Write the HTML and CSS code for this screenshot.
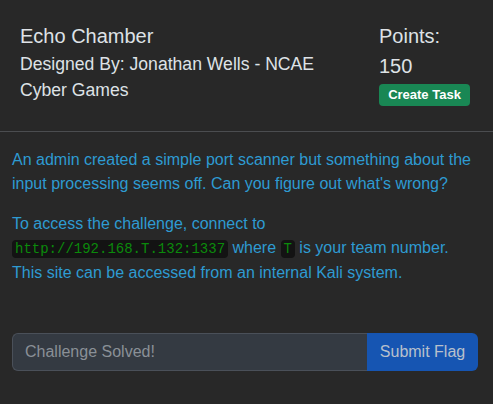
FILE: index.html
```html
<!DOCTYPE html>
<html>
<head>
<meta charset="utf-8">
<link rel="stylesheet" href="styles.css">
</head>
<body>
<div class="panel">
  <header class="head">
    <div class="info">
      <h5 class="title">Echo Chamber</h5>
      <div class="author">Designed By: Jonathan Wells - NCAE Cyber Games</div>
    </div>
    <div class="points">
      <h5 class="plabel">Points:</h5>
      <div class="pval">150</div>
      <button class="task">Create Task</button>
    </div>
  </header>
  <section class="body">
    <p>An admin created a simple port scanner but something about the input processing seems off. Can you figure out what's wrong?</p>
    <p>To access the challenge, connect to <code>http://192.168.T.132:1337</code> where <code>T</code> is your team number. This site can be accessed from an internal Kali system.</p>
    <div class="group">
      <input class="flag" placeholder="Challenge Solved!" disabled>
      <button class="submit" disabled>Submit Flag</button>
    </div>
  </section>
</div>
</body>
</html>
```

FILE: styles.css
```css
* { box-sizing: border-box; }
html, body { margin: 0; padding: 0; background: #282828; }
body {
  font-family: "Liberation Sans", Arial, sans-serif;
  color: #dee2e6;
  width: 493px;
  height: 404px;
  overflow: hidden;
}
.head {
  display: flex;
  justify-content: space-between;
  padding: 24px 23px 25px 20px;
  border-bottom: 1px solid #4b4d50;
}
.info { width: 300px; }
.title, .plabel {
  margin: 0;
  font-size: 20px;
  font-weight: 400;
  line-height: 24px;
}
.author {
  margin-top: 3px;
  font-size: 17.6px;
  line-height: 26px;
}
.points {
  display: flex;
  flex-direction: column;
  align-items: flex-start;
  width: 91px;
}
.pval {
  margin-top: 6px;
  font-size: 20px;
  line-height: 24px;
}
.task {
  margin-top: 6px;
  background: #198754;
  color: #fff;
  border: 0;
  border-radius: 4px;
  font-family: "Liberation Sans", Arial, sans-serif;
  font-weight: 700;
  font-size: 13px;
  line-height: 16px;
  padding: 3px 8px;
  width: 91px;
  height: 22px;
}
.body {
  padding: 16px 15px 0 12px;
  color: #2e9bd2;
  font-size: 16px;
  line-height: 24px;
}
.body p { margin: 0 0 16px; }
code {
  font-family: "Liberation Mono", "Courier New", monospace;
  font-size: 14px;
  color: #0b8a0b;
  background: #131313;
  border-radius: 4px;
  padding: 1px 3px;
}
.group {
  display: flex;
  margin-top: 48px;
  height: 38px;
}
.flag {
  flex: 1;
  min-width: 0;
  background: #343a42;
  border: 1px solid #4a5059;
  border-right: 0;
  border-radius: 6px 0 0 6px;
  padding: 6px 12px;
  font-family: "Liberation Sans", Arial, sans-serif;
  font-size: 16px;
  color: #dee2e6;
}
.flag::placeholder { color: #8a9097; }
.submit {
  width: 111px;
  background: #1655b2;
  color: #b8c0cc;
  border: 0;
  border-radius: 0 6px 6px 0;
  font-family: "Liberation Sans", Arial, sans-serif;
  font-size: 16px;
  padding: 6px 12px;
}
```
